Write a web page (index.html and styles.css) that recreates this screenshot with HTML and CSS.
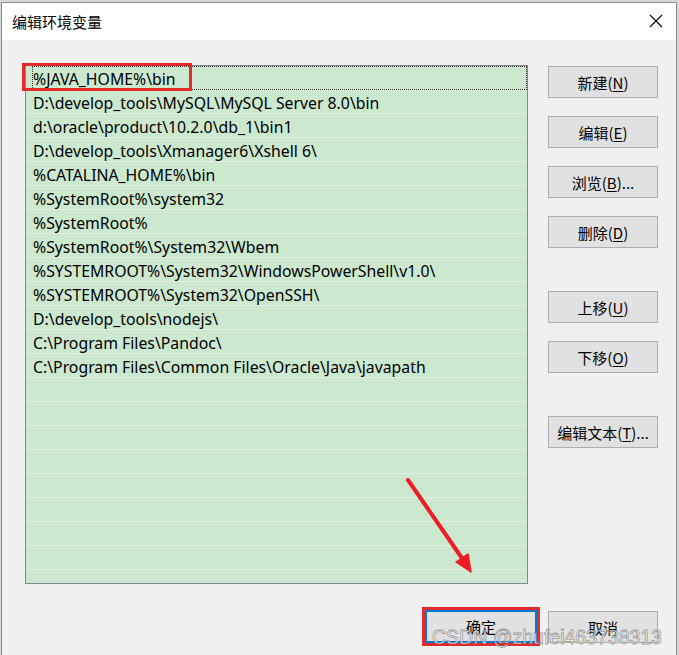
FILE: index.html
```html
<!DOCTYPE html>
<html lang="zh-CN">
<head>
<meta charset="utf-8">
<title>编辑环境变量</title>
<link rel="stylesheet" href="styles.css">
</head>
<body>
<div class="window">
  <div class="titlebar">
    <span class="title">编辑环境变量</span>
    <svg class="close" width="14" height="14" viewBox="0 0 14 14"><path d="M1 1L13 13M13 1L1 13" stroke="#000" stroke-width="1.1" fill="none"/></svg>
  </div>
  <div class="main">
    <div class="content">
      <div class="list">
        <div class="row focus">%JAVA_HOME%\bin</div>
        <div class="row">D:\develop_tools\MySQL\MySQL Server 8.0\bin</div>
        <div class="row">d:\oracle\product\10.2.0\db_1\bin1</div>
        <div class="row">D:\develop_tools\Xmanager6\Xshell 6\</div>
        <div class="row">%CATALINA_HOME%\bin</div>
        <div class="row">%SystemRoot%\system32</div>
        <div class="row">%SystemRoot%</div>
        <div class="row">%SystemRoot%\System32\Wbem</div>
        <div class="row">%SYSTEMROOT%\System32\WindowsPowerShell\v1.0\</div>
        <div class="row">%SYSTEMROOT%\System32\OpenSSH\</div>
        <div class="row">D:\develop_tools\nodejs\</div>
        <div class="row">C:\Program Files\Pandoc\</div>
        <div class="row">C:\Program Files\Common Files\Oracle\Java\javapath</div>
        <div class="row"></div>
        <div class="row"></div>
        <div class="row"></div>
        <div class="row"></div>
        <div class="row"></div>
        <div class="row"></div>
        <div class="row"></div>
        <div class="row"></div>
        <div class="row last"></div>
      </div>
      <div class="buttons">
        <div class="group">
          <button class="btn">新建(<u>N</u>)</button>
          <button class="btn">编辑(<u>E</u>)</button>
          <button class="btn">浏览(<u>B</u>)...</button>
          <button class="btn">删除(<u>D</u>)</button>
        </div>
        <div class="group">
          <button class="btn">上移(<u>U</u>)</button>
          <button class="btn">下移(<u>O</u>)</button>
        </div>
        <div class="group">
          <button class="btn">编辑文本(<u>T</u>)...</button>
        </div>
      </div>
    </div>
    <div class="footer">
      <div class="okwrap"><button class="btn ok">确定</button></div>
      <button class="btn">取消</button>
    </div>
  </div>
</div>
<svg class="arrow" width="679" height="655" viewBox="0 0 679 655">
  <path d="M408 480L466 564" stroke="#ee1c25" stroke-width="4" stroke-linecap="round" fill="none"/>
  <path d="M471 572L456 562L468 554Z" fill="#ee1c25" stroke="#ee1c25" stroke-width="1.5" stroke-linejoin="round"/>
</svg>
<div class="watermark">CSDN @zhufei463738313</div>
</body>
</html>
```

FILE: styles.css
```css
html, body {
  margin: 0;
  padding: 0;
}
body {
  width: 679px;
  height: 655px;
  overflow: hidden;
  background: #d6d6d6;
  position: relative;
  font-family: "Noto Sans", "Noto Sans CJK SC", sans-serif;
  font-size: 15px;
  color: #000;
}
.window {
  margin: 2px 0 0 1px;
  width: 674px;
  height: 660px;
  border: 1px solid #8c8c8c;
  border-bottom: none;
  background: #f0f0f0;
  box-sizing: content-box;
}
.titlebar {
  height: 37px;
  background: #fff;
  display: flex;
  align-items: center;
  justify-content: space-between;
  padding: 0 13px 0 10px;
}
.title {
  font-family: "Noto Sans CJK SC", sans-serif;
  font-size: 15px;
  margin-top: -1px;
}
.close {
  display: block;
  margin-top: -1px;
}
.main {
  padding: 25px 0 0 23px;
}
.content {
  display: flex;
  align-items: flex-start;
}
.list {
  width: 501px;
  height: 517px;
  border: 1px solid #828790;
  background: #cce8cf;
}
.row {
  height: 20px;
  padding: 3px 0 0 7px;
  border-bottom: 1px solid #e6ede6;
  line-height: 20px;
  white-space: nowrap;
  font-family: "Noto Sans", "Noto Sans CJK SC", sans-serif;
  font-size: 15.8px;
  position: relative;
}
.row.last {
  height: 13px;
  padding-top: 0;
  border-bottom: none;
}
.row.focus {
  outline: 1px dotted #333;
  outline-offset: -1px;
  margin-left: 6px;
  padding-left: 1px;
}
.row.focus::after {
  content: "";
  position: absolute;
  left: -10px;
  top: -3px;
  width: 164px;
  height: 22px;
  border: 3px solid #e52a2a;
}
.buttons {
  margin-left: 20px;
  padding-top: 1px;
  display: flex;
  flex-direction: column;
  gap: 43px;
}
.group {
  display: flex;
  flex-direction: column;
  gap: 18px;
}
.btn {
  width: 110px;
  height: 32px;
  margin: 0;
  padding: 0;
  background: #e1e1e1;
  border: 1px solid #adadad;
  font-family: "Noto Sans CJK SC", sans-serif;
  font-size: 15px;
  color: #000;
  display: flex;
  align-items: center;
  justify-content: center;
}
.btn u {
  text-underline-offset: 2px;
}
.footer {
  display: flex;
  align-items: flex-start;
  margin-top: 27px;
  padding-left: 397px;
  gap: 8px;
}
.okwrap {
  border: 3px solid #e52a2a;
  margin-top: -4px;
}
.btn.ok {
  width: 112px;
  height: 33px;
  border: 2px solid #0078d7;
}
.arrow {
  position: absolute;
  left: 0;
  top: 0;
  pointer-events: none;
}
.watermark {
  position: absolute;
  left: 432px;
  top: 626px;
  font-family: "Liberation Sans", Arial, sans-serif;
  font-size: 19.5px;
  color: rgba(255, 255, 255, 0.8);
  -webkit-text-stroke: 0.8px rgba(90, 90, 90, 0.6);
  white-space: nowrap;
}
```
